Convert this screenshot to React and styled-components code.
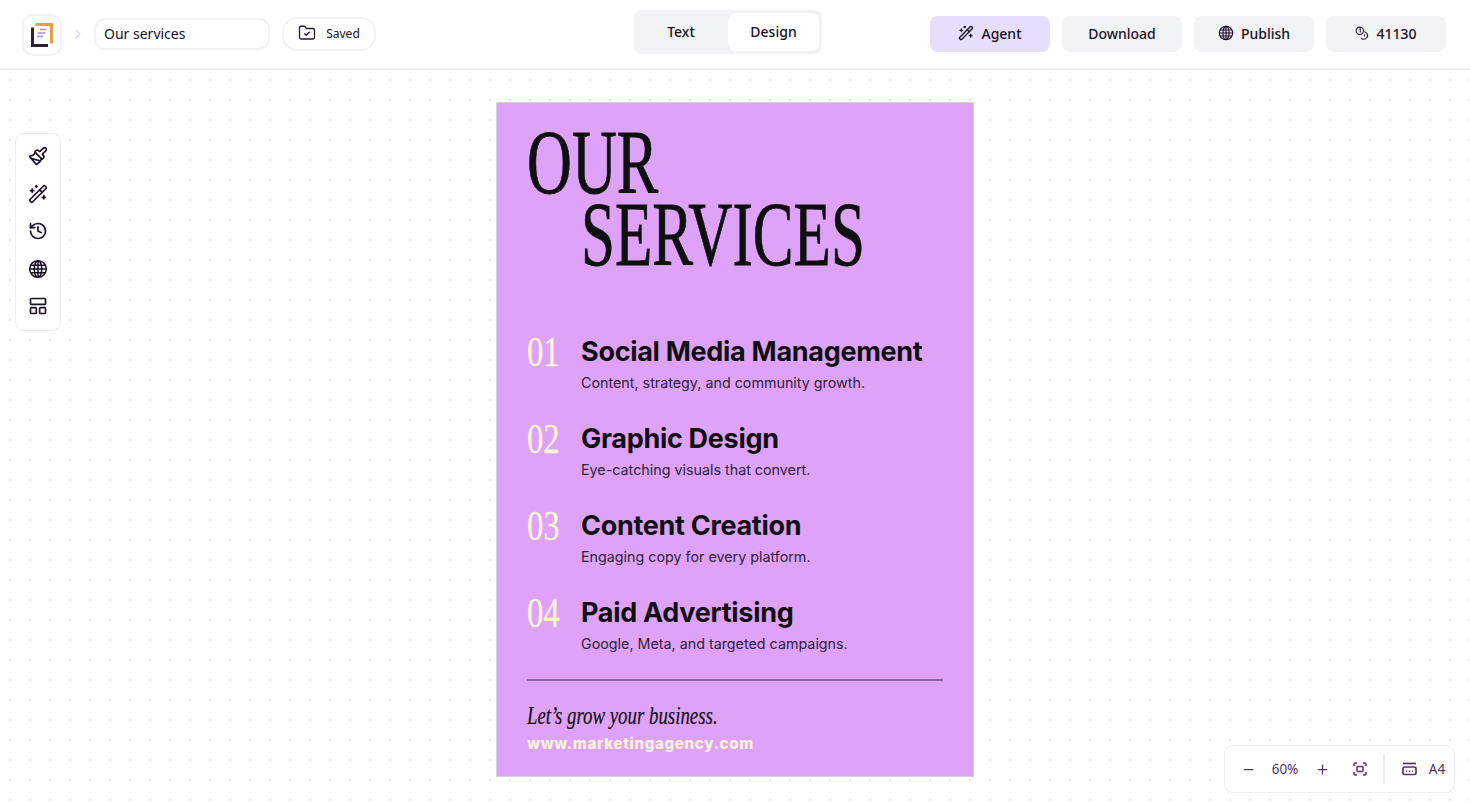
import React from "react";
import styled, { createGlobalStyle } from "styled-components";
import { ChevronRight, FolderCheck, WandSparkles, Paintbrush, History, LayoutPanelTop, Minus, Plus } from "lucide-react";

const Global = createGlobalStyle`
  html, body { margin: 0; padding: 0; height: 100%; background: #fff; overflow: hidden; }
  body { font-family: "Noto Sans", "Open Sans", sans-serif; color: #1a1026; }
  #root { height: 100%; }
`;

const Page = styled.div`
  width: 1470px; height: 802px; display: flex; flex-direction: column; position: relative; overflow: hidden;
`;
const Header = styled.header`
  height: 68px; flex: none; display: flex; align-items: center; padding: 0 24px 0 22px;
  border-bottom: 2px solid #eeeef2; background: #fff;
`;
const LogoBox = styled.div`
  width: 36px; height: 38px; border: 2px solid #f3f3f6; border-radius: 11px;
  display: flex; align-items: center; justify-content: center; margin-top: 1px;
`;
const Crumb = styled.span`
  color: #e0cdf0; display: flex; width: 32px; justify-content: center;
`;
const NameField = styled.div`
  width: 164px; height: 26px; border: 2px solid #f3f3f6; border-radius: 11px; padding-bottom: 2px;
  display: flex; align-items: center; padding-left: 8px; font-size: 14px; color: #14101c; box-sizing: content-box;
`;
const SavedChip = styled.div`
  margin-left: 12px; width: 90px; height: 28px; padding-bottom: 2px; border: 2px solid #f3f3f6; border-radius: 15px;
  display: flex; align-items: center; justify-content: center; gap: 10px; font-size: 12px; color: #14101c;
`;
const Tabs = styled.div`
  margin-left: 258px; width: 188px; height: 44px; box-sizing: border-box; padding: 3px 3px 3px 0;
  background: #f2f3f5; border-radius: 8px; display: flex; margin-top: -4px;
`;
const Tab = styled.div`
  flex: ${p => (p.$active ? "0 0 91px" : "1")}; border-radius: 8px; display: flex; align-items: center; justify-content: center;
  font-size: 14px; font-weight: 500; color: #1a1026; background: ${p => (p.$active ? "#fff" : "transparent")}; padding-bottom: 2px;
`;
const Actions = styled.div`
  margin-left: auto; display: flex; gap: 12px;
`;
const ActionButton = styled.div`
  width: 120px; height: 36px; box-sizing: border-box; padding-bottom: 2px; border-radius: 8px; background: ${p => (p.$accent ? "#e5dffd" : "#f2f3f5")};
  display: flex; align-items: center; justify-content: center; gap: 7px; font-size: 14px; font-weight: 500; color: #1a1026;
`;
const Canvas = styled.main`
  flex: 1; position: relative; display: flex; justify-content: center; padding-top: 32px;
  background-color: #fff;
  background-image: radial-gradient(circle at center, #e6e6ea 1.1px, transparent 1.5px);
  background-size: 20px 20px;
  background-position: 0px 0px;
`;
const Poster = styled.article`
  width: 476px; height: 673px; box-sizing: content-box; border: 1px solid #d6d0dc; background: #dea3f8;
  padding: 0; display: flex; flex-direction: column; align-items: stretch; overflow: hidden;
`;
const Inner = styled.div`
  padding: 24px 30px 0; display: flex; flex-direction: column; flex: 1;
`;
const Condensed = styled.span`
  display: block; white-space: nowrap; transform-origin: left center; transform: scaleX(${p => p.$x});
`;
const Title = styled.h1`
  margin: 0 0 63px; font-family: "Liberation Serif", serif; font-weight: 400; font-size: 91px; line-height: 72px; color: #0f0f0f;
  -webkit-text-stroke: 0.8px #0f0f0f;
`;
const TitleLine = styled(Condensed)`
  margin-left: ${p => p.$indent || 0}px;
`;
const Services = styled.ul`
  list-style: none; margin: 0; padding: 0; display: flex; flex-direction: column; gap: 19px;
`;
const Service = styled.li`
  display: flex; height: 68px;
`;
const Num = styled.div`
  width: 54px; flex: none; font-family: "Liberation Serif", serif; font-size: 43px; line-height: 36px; color: #fdf3d8;
  -webkit-text-stroke: 0.3px #fdf3d8;
`;
const ServiceBody = styled.div`
  display: flex; flex-direction: column;
`;
const ServiceName = styled.div`
  font-family: Inter, sans-serif; font-weight: 700; font-size: 27px; line-height: 36px; color: #0f0f0f; letter-spacing: -0.3px; white-space: nowrap;
`;
const ServiceDesc = styled.div`
  font-family: Inter, sans-serif; font-size: 14.3px; line-height: 24px; margin-top: 1px; color: #2e2238; white-space: nowrap;
`;
const Rule = styled.hr`
  margin: 16px 0 0; border: 0; height: 2px; background: #8a66a0; width: 416px;
`;
const Tagline = styled.div`
  margin-top: 20px; font-family: "Liberation Serif", serif; font-style: italic; font-size: 26px; line-height: 30px; color: #0f0f0f;
  -webkit-text-stroke: 0.2px #0f0f0f;
`;
const Url = styled.div`
  font-family: Inter, sans-serif; font-weight: 800; font-size: 15px; line-height: 22px; letter-spacing: 0.7px; color: #fdf3d8; margin-top: 2px;
`;
const SideBar = styled.nav`
  position: absolute; left: 15px; top: 63px; width: 44px; height: 170px; background: #fff;
  border: 1px solid #eeeef2; border-radius: 9px; display: flex; flex-direction: column; align-items: center; justify-content: space-between; padding: 12px 0 14px; box-sizing: content-box;
`;
const ZoomBar = styled.div`
  position: absolute; right: 15px; top: 675px; width: 229px; height: 46px; background: #fff; border: 1px solid #eeeef2; border-radius: 9px;
  display: flex; align-items: center; font-size: 13.5px; color: #4b3a5e;
`;
const ZoomSlot = styled.div`
  display: flex; align-items: center; justify-content: center; width: ${p => p.$w}px; flex: none;
`;
const Divider = styled.div`
  width: 2px; height: 30px; background: #eeeef2; flex: none; margin: 0 14px 0 8px;
`;

const Logo = () => (
  <svg width="22" height="24" viewBox="0 0 22 24">
    <path d="M4.500 1.500h16v19" fill="none" stroke="#e69f45" strokeWidth="3" />
    <path d="M1.500 4.500V22.500H17" fill="none" stroke="#2c2036" strokeWidth="3" />
    <path d="M9 6.500h6M6.500 10h8M6 13.500h6" stroke="#b78ad8" strokeWidth="1.7" />
  </svg>
);
const Globe = ({ size = 16, c = "#1a1026" }) => (
  <svg width={size} height={size} viewBox="0 0 24 24" fill="none" stroke={c} strokeWidth="1.8">
    <circle cx="12" cy="12" r="10" />
    <ellipse cx="12" cy="12" rx="4.500" ry="10" />
    <path d="M12 2v20M2 12h20M3.300 7.500h17.400M3.300 16.500h17.400" />
  </svg>
);
const CoinsIcon = () => (
  <svg width="14" height="14" viewBox="0 0 16 16" fill="none" stroke="#1a1026" strokeWidth="1.2">
    <circle cx="5.500" cy="5.500" r="4.200" />
    <path d="M5 4l1-.6v4" />
    <path d="M10.500 6.600a4.300 4.300 0 1 1-3.800 7" />
    <path d="M11 9.500v2.500" />
  </svg>
);
const FitIcon = () => (
  <svg width="14" height="14" viewBox="0 0 14 14" fill="none" stroke="#4b3a5e" strokeWidth="1.5">
    <path d="M1 4V2.500A1.500 1.500 0 0 1 2.500 1H4M10 1h1.500A1.500 1.500 0 0 1 13 2.500V4M13 10v1.500a1.500 1.500 0 0 1-1.500 1.500H10M4 13H2.500A1.500 1.500 0 0 1 1 11.500V10" />
    <rect x="4" y="4.500" width="6" height="5" rx="1" />
  </svg>
);
const PageSizeIcon = () => (
  <svg width="15" height="14" viewBox="0 0 15 14" fill="none" stroke="#4b3a5e" strokeWidth="1.7">
    <path d="M1 1.500h13" />
    <rect x="1" y="5" width="13" height="7.500" rx="1.500" />
    <path d="M4.500 8.500v1.500M7.500 8.500v1.500M10.500 8.500v1.500" strokeWidth="1" />
  </svg>
);

const services = [
  ["01", "Social Media Management", "Content, strategy, and community growth."],
  ["02", "Graphic Design", "Eye-catching visuals that convert."],
  ["03", "Content Creation", "Engaging copy for every platform."],
  ["04", "Paid Advertising", "Google, Meta, and targeted campaigns."],
];

export default function App() {
  return (
    <Page>
      <Global />
      <Header>
        <LogoBox><Logo /></LogoBox>
        <Crumb><ChevronRight size={16} strokeWidth={1.6} /></Crumb>
        <NameField>Our services</NameField>
        <SavedChip><FolderCheck size={18} strokeWidth={1.7} color="#1f1630" />Saved</SavedChip>
        <Tabs>
          <Tab>Text</Tab>
          <Tab $active>Design</Tab>
        </Tabs>
        <Actions>
          <ActionButton $accent><WandSparkles size={16} strokeWidth={2} />Agent</ActionButton>
          <ActionButton>Download</ActionButton>
          <ActionButton><Globe />Publish</ActionButton>
          <ActionButton><CoinsIcon />41130</ActionButton>
        </Actions>
      </Header>
      <Canvas>
        <SideBar>
          <Paintbrush size={20} strokeWidth={2} />
          <WandSparkles size={20} strokeWidth={2} />
          <History size={20} strokeWidth={2} />
          <Globe size={20} />
          <LayoutPanelTop size={20} strokeWidth={2} />
        </SideBar>
        <Poster>
          <Inner>
            <Title>
              <TitleLine $x={0.683}>OUR</TitleLine>
              <TitleLine $x={0.672} $indent={54}>SERVICES</TitleLine>
            </Title>
            <Services>
              {services.map(([n, name, desc]) => (
                <Service key={n}>
                  <Num><Condensed $x={0.76}>{n}</Condensed></Num>
                  <ServiceBody>
                    <ServiceName>{name}</ServiceName>
                    <ServiceDesc>{desc}</ServiceDesc>
                  </ServiceBody>
                </Service>
              ))}
            </Services>
            <Rule />
            <Tagline><Condensed $x={0.725}>Let’s grow your business.</Condensed></Tagline>
            <Url>www.marketingagency.com</Url>
          </Inner>
        </Poster>
        <ZoomBar>
          <ZoomSlot $w={46}><Minus size={15} strokeWidth={2} /></ZoomSlot>
          <ZoomSlot $w={28}>60%</ZoomSlot>
          <ZoomSlot $w={46}><Plus size={15} strokeWidth={2} /></ZoomSlot>
          <ZoomSlot $w={30}><FitIcon /></ZoomSlot>
          <Divider />
          <ZoomSlot $w={20}><PageSizeIcon /></ZoomSlot>
          <ZoomSlot $w={36}>A4</ZoomSlot>
        </ZoomBar>
      </Canvas>
    </Page>
  );
}
